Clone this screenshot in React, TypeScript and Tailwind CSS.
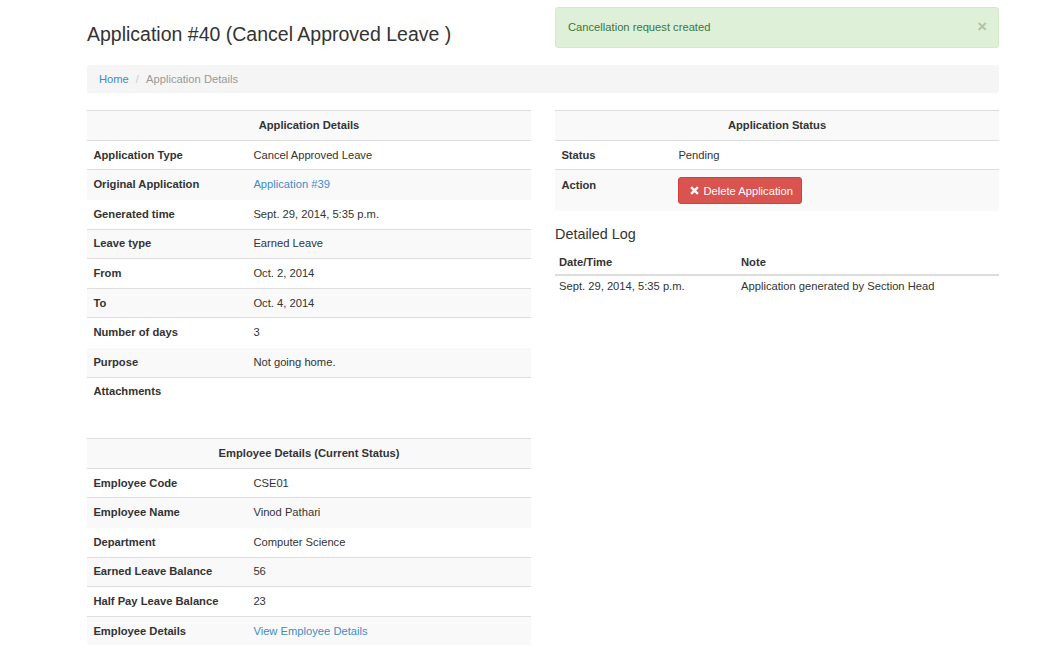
import React from "react";

type Row = {
  label: string;
  value: string;
  link?: boolean;
  noTopBorder?: boolean;
};

const applicationRows: Row[] = [
  { label: "Application Type", value: "Cancel Approved Leave" },
  { label: "Original Application", value: "Application #39", link: true },
  { label: "Generated time", value: "Sept. 29, 2014, 5:35 p.m.", noTopBorder: true },
  { label: "Leave type", value: "Earned Leave" },
  { label: "From", value: "Oct. 2, 2014" },
  { label: "To", value: "Oct. 4, 2014" },
  { label: "Number of days", value: "3" },
  { label: "Purpose", value: "Not going home.", noTopBorder: true },
  { label: "Attachments", value: "" },
];

const employeeRows: Row[] = [
  { label: "Employee Code", value: "CSE01" },
  { label: "Employee Name", value: "Vinod Pathari" },
  { label: "Department", value: "Computer Science", noTopBorder: true },
  { label: "Earned Leave Balance", value: "56" },
  { label: "Half Pay Leave Balance", value: "23" },
  { label: "Employee Details", value: "View Employee Details", link: true },
];

const DetailTable = ({ title, rows }: { title: string; rows: Row[] }) => (
  <table className="w-full border-collapse">
    <tbody>
      <tr className="bg-[#f9f9f9]">
        <th
          colSpan={2}
          className="border-t border-b border-[#dddddd] px-[6.4px] pt-[5.6px] pb-[7px] text-center font-bold"
        >
          {title}
        </th>
      </tr>
      {rows.map((row, i) => (
        <tr key={row.label} className={i % 2 === 1 ? "bg-[#f9f9f9]" : "bg-white"}>
          <th
            className={`w-[160px] px-[6.4px] pt-[5.8px] pb-[6.8px] text-left align-top font-bold ${
              row.noTopBorder ? "border-t border-transparent" : "border-t border-[#dddddd]"
            }`}
          >
            {row.label}
          </th>
          <td
            className={`px-[6.4px] pt-[5.8px] pb-[6.8px] align-top ${
              row.noTopBorder ? "border-t border-transparent" : "border-t border-[#dddddd]"
            }`}
          >
            {row.link ? <a className="text-[#428bca]">{row.value}</a> : row.value || "\u00a0"}
          </td>
        </tr>
      ))}
    </tbody>
  </table>
);

const RemoveIcon = () => (
  <svg width="9" height="9" viewBox="0 0 10 10" className="mr-[4px] shrink-0">
    <path d="M1.2 1.2 L8.8 8.8 M8.8 1.2 L1.2 8.8" stroke="white" strokeWidth="2.6" />
  </svg>
);

const App = () => {
  return (
    <div className="min-h-screen bg-white font-['Liberation_Sans',Arial,sans-serif] text-[11.2px] leading-[16px] text-[#333333]">
      <div className="ml-[87px] w-[912px]">
        {/* heading + flash message */}
        <div className="grid grid-cols-2 gap-x-[24px]">
          <h3 className="pt-[24px] text-[19.5px] leading-[21px] font-normal">
            Application #40 (Cancel Approved Leave )
          </h3>
          <div className="mt-[7px] flex items-center justify-between rounded-[3px] border border-[#d6e9c6] bg-[#dff0d8] pt-[10.5px] pb-[12.5px] pl-[12px] pr-[11px] text-[#3c763d]">
            <span>Cancellation request created</span>
            <span className="text-[16.8px] leading-[16px] font-bold text-black opacity-20">×</span>
          </div>
        </div>

        <div className="mt-[16.5px] rounded-[3px] bg-[#f5f5f5] px-[12px] py-[6.4px]">
          <a className="text-[#428bca]">Home</a>
          <span className="px-[4px] pl-[7px] text-[#cccccc]">/&nbsp;</span>
          <span className="text-[#999999]">Application Details</span>
        </div>

        <div className="mt-[17px] grid grid-cols-2 gap-x-[24px]">
          <div>
            <DetailTable title="Application Details" rows={applicationRows} />
            <div className="mt-[32px]">
              <DetailTable title="Employee Details (Current Status)" rows={employeeRows} />
            </div>
          </div>

          <div>
            <table className="w-full border-collapse">
              <tbody>
                <tr className="bg-[#f9f9f9]">
                  <th
                    colSpan={2}
                    className="border-t border-b border-[#dddddd] px-[6.4px] pt-[5.6px] pb-[7px] text-center font-bold"
                  >
                    Application Status
                  </th>
                </tr>
                <tr className="bg-white">
                  <th className="w-[117px] border-t border-[#dddddd] px-[6.4px] pt-[5.8px] pb-[6.8px] text-left align-top font-bold">
                    Status
                  </th>
                  <td className="border-t border-[#dddddd] px-[6.4px] pt-[5.8px] pb-[6.8px]">Pending</td>
                </tr>
                <tr className="bg-[#f9f9f9]">
                  <th className="border-t border-[#dddddd] px-[6.4px] pt-[6.8px] pb-[6.3px] text-left align-top font-bold">
                    Action
                  </th>
                  <td className="border-t border-[#dddddd] px-[6.4px] py-[6.6px]">
                    <button className="flex h-[27px] items-center rounded-[3px] border border-[#d43f3a] bg-[#d9534f] pl-[11px] pr-[8px] text-white">
                      <RemoveIcon />
                      Delete Application
                    </button>
                  </td>
                </tr>
              </tbody>
            </table>

            <h4 className="mt-[15px] text-[14.4px] leading-[16px] font-normal">Detailed Log</h4>
            <table className="mt-[8px] w-full border-collapse">
              <thead>
                <tr>
                  <th className="w-[182px] border-b-2 border-[#dddddd] p-[4px] text-left font-bold">
                    Date/Time
                  </th>
                  <th className="border-b-2 border-[#dddddd] p-[4px] text-left font-bold">Note</th>
                </tr>
              </thead>
              <tbody>
                <tr>
                  <td className="px-[4px] pt-[2px] pb-[4px]">Sept. 29, 2014, 5:35 p.m.</td>
                  <td className="px-[4px] pt-[2px] pb-[4px]">Application generated by Section Head</td>
                </tr>
              </tbody>
            </table>
          </div>
        </div>
      </div>
    </div>
  );
};

export default App;
